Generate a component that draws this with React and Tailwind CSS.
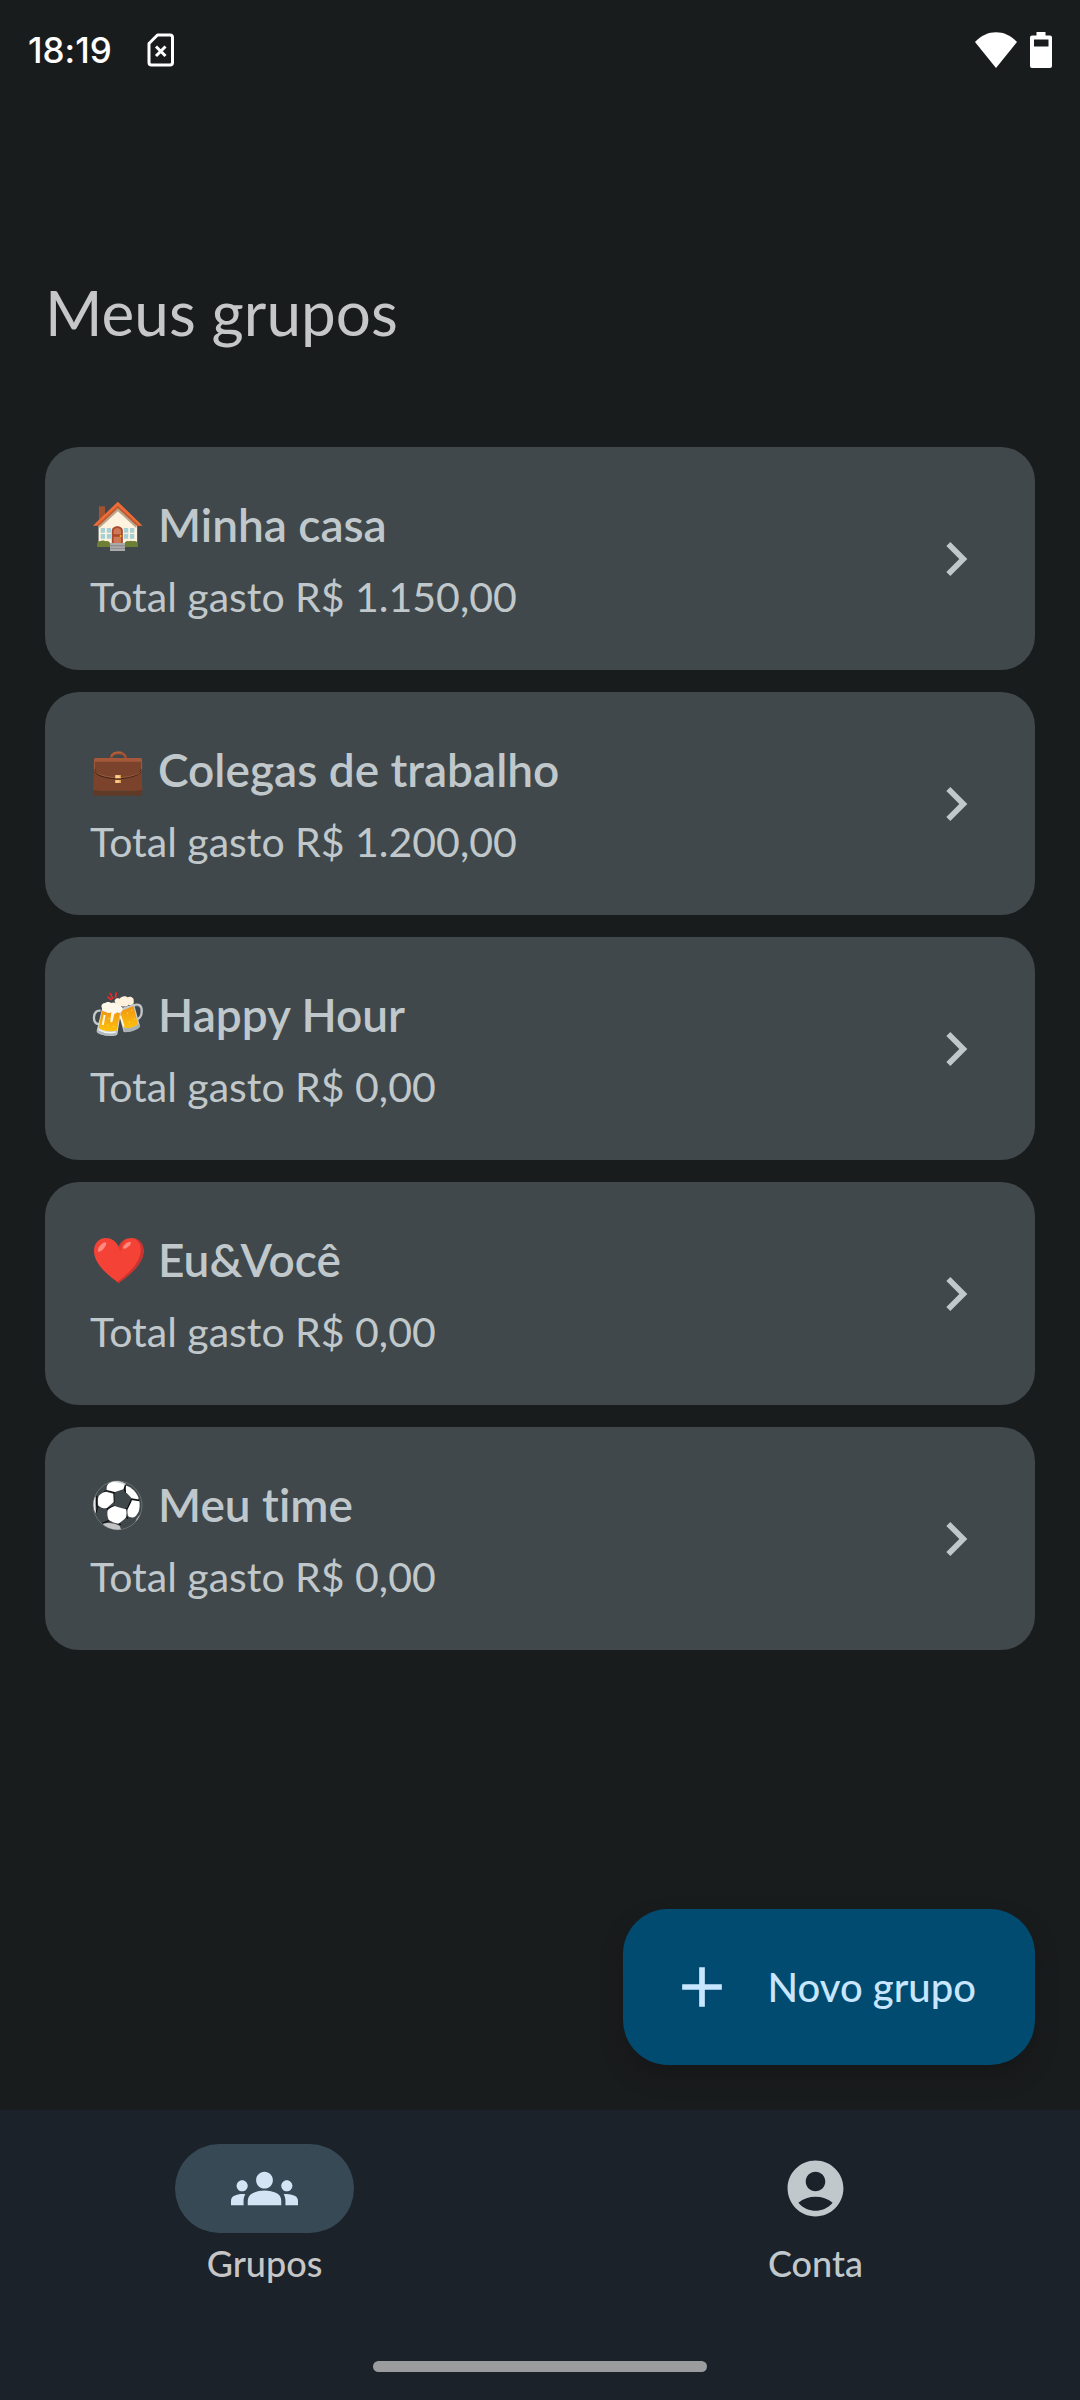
import { MdAccountCircle, MdAdd, MdChevronRight, MdGroups } from "react-icons/md";

function HouseIcon() {
  return (
    <svg viewBox="0 204 168 168" className="size-14 shrink-0" aria-hidden="true">
      <g transform="translate(-180 0) scale(1.0714 1)">
        <rect x="193" y="229" width="17" height="42" fill="#a3522f" />
        <path d="M192 286 246 233l54 53v63H192z" fill="#fff3e0" />
        <path d="M246 232 194 283v12l52-51 52 51v-12z" fill="#b8a68f" />
        <path d="M246 215 176 287h16l54-55 54 55h15z" fill="#ef6c36" />
        <path d="M246 227 186 287h7l53-52 53 52h8z" fill="#bf5a2f" />
        <g fill="#a5d0d6">
          <path d="M198 294h12v14h-12zM215 294h12v14h-12zM198 312h12v14h-12zM215 312h12v14h-12z" />
          <path d="M263 294h12v14h-12zM280 294h12v14h-12zM263 312h12v14h-12zM280 312h12v14h-12z" />
        </g>
        <path d="M229 342v-40c0-18 31-18 31 0v40z" fill="#a9482c" />
        <path d="M234 313v-9c0-13 21-13 21 0v9zM234 320h21v19h-21z" fill="#cf7856" />
        <circle cx="254" cy="318" r="3" fill="#ffb300" />
        <path d="M188 351v-9c0-7 6-10 11-9 5-3 10-1 12 1 6-3 13 0 13 7v10zM265 351v-10c0-7 7-9 12-7 4-3 8-2 11 0 6-3 14 1 14 8v9z" fill="#6d7f35" />
        <path d="M224 339h42v24h-42z" fill="#aaa" />
        <path d="M224 346h42v3h-42zM224 355h42v2h-42z" fill="#888" />
      </g>
    </svg>
  );
}

function BriefcaseIcon() {
  return (
    <svg viewBox="30 39 168 168" className="size-14 shrink-0" aria-hidden="true">
      <path d="M94 83c-1-19 43-19 43 0" fill="none" stroke="#a5532f" strokeWidth="8" />
      <path d="M94 78c3-12 20-13 30-11" fill="none" stroke="#c9744b" strokeWidth="2" />
      <path d="M43 100h141l3 83H39z" fill="#7b432c" />
      <path d="M39 180c20 5 128 5 148 0l-1 14q-1 3-4 3H44q-3 0-4-3z" fill="#5f3a26" />
      <path d="M46 84h136q4 0 4 5v27c0 10-8 15-18 19-32 12-78 12-109 0-10-4-17-10-17-19V89q0-5 4-5z" fill="#7b432c" />
      <path d="M44 118c1 12 12 18 26 22 28 8 60 7 88-1 14-4 25-11 26-22" fill="none" stroke="#3f231b" strokeWidth="4" />
      <path d="M43 95v21c0 9 7 14 17 18 31 12 76 12 107 0 10-4 18-9 18-18V95" fill="none" stroke="#b76c43" strokeWidth="2" />
      <path d="M46 84h136q4 0 4 5v6H42v-6q0-5 4-5z" fill="#a6583a" />
      <path d="M105 135h18v24h-18z" fill="#db9c5a" />
      <path d="M105 145h18v5h-18z" fill="#6d3b22" />
      <path d="M107 136h12v8h-12zM107 151h11v7h-11z" fill="#ffd18a" />
    </svg>
  );
}

function BeersIcon() {
  return (
    <svg viewBox="30 54 168 168" className="size-14 shrink-0" aria-hidden="true">
      <defs>
        <linearGradient id="beer" x1="0" y1="0" x2="0" y2="1">
          <stop offset="0" stopColor="#ef9413" />
          <stop offset="1" stopColor="#ffc20a" />
        </linearGradient>
      </defs>
      <path d="M82 80l13 10M90 69l9 18M109 67l-3 17" stroke="#ee2a2a" strokeWidth="5" fill="none" />
      <path d="M161 106c15-6 24 1 24 15 1 14-6 25-17 29" fill="none" stroke="#c2c8ca" strokeWidth="7" />
      <path d="M163 109c12-4 19 1 19 13" fill="none" stroke="#888f92" strokeWidth="2" />
      <path d="M62 122c-13-2-19 7-20 19-1 13 5 22 15 21" fill="none" stroke="#c2c8ca" strokeWidth="7" />
      <path d="M113 118l49-16 18 66c1 8-37 21-49 18z" fill="#c5cbcd" />
      <path d="M118 125l42-17 14 55c-6 9-32 15-40 11z" fill="url(#beer)" />
      <path d="M131 174c16 2 35-3 46-13l3 9c-9 12-34 18-47 15z" fill="#a9b0b3" />
      <path d="M121 137l10 32" stroke="#fff8df" strokeWidth="5" />
      <path d="M67 112l56 12-11 69c-4 9-56 5-62-10z" fill="#d7dcde" />
      <path d="M66 122l54 7-9 52c-12 6-44 3-55-7z" fill="url(#beer)" />
      <path d="M54 176c16 9 40 12 57 6l-2 12c-10 7-53 3-59-9z" fill="#b3babd" />
      <path d="M56 179c16 9 36 11 51 7" fill="none" stroke="#f3f5f5" strokeWidth="4" />
      <path d="M74 135l-6 30" stroke="#fff8df" strokeWidth="6" />
      <path d="M105 97c-4-8 5-15 14-11 4-8 18-10 24-4 8-5 20 1 18 11 3 10-8 14-15 11-7 8-18 6-22 4-6 5-17 1-19-11z" fill="#fff1dc" />
      <path d="M66 114c-5-8 2-16 10-15 3-4 13-4 17 0 7-4 17 0 18 5 10 0 20 8 16 17-3 8-13 9-16 3-1 7-7 9-8 8l-5 21c-1 6-8 5-7-1l3-25c-9 4-14 1-16-2-7 2-12-3-12-11z" fill="#fff7ea" />
      <g fill="#ffdf65">
        <circle cx="86" cy="145" r="2" />
        <circle cx="83" cy="166" r="2" />
        <circle cx="101" cy="169" r="2" />
        <circle cx="143" cy="130" r="2" />
        <circle cx="155" cy="121" r="2" />
        <circle cx="148" cy="156" r="2" />
        <circle cx="163" cy="147" r="2" />
      </g>
    </svg>
  );
}

function HeartIcon() {
  return (
    <svg viewBox="30 54 168 168" className="size-14 shrink-0" aria-hidden="true">
      <path d="M116 204C88 184 42 148 42 108c0-22 14-39 35-39 17 0 31 9 39 26 8-17 22-26 38-26 22 0 37 17 37 39 0 40-47 76-75 96z" fill="#f44336" />
      <path d="M158 69c20 1 33 17 33 39 0 40-47 76-75 96l-4-3c31-24 66-54 70-91 2-20-6-35-24-41z" fill="#c63330" />
      <path d="M116 94c4-11 12-19 23-23-7 8-14 19-16 38-5-3-7-8-7-15z" fill="#d9372f" opacity="0.7" />
      <ellipse cx="66" cy="96" rx="7" ry="18" transform="rotate(40 66 96)" fill="#ff8a80" />
      <ellipse cx="141" cy="91" rx="6" ry="14" transform="rotate(50 141 91)" fill="#ff8a80" />
    </svg>
  );
}

function BallIcon() {
  return (
    <svg viewBox="30 54 168 168" className="size-14 shrink-0" aria-hidden="true">
      <defs>
        <clipPath id="ball">
          <circle cx="113" cy="136" r="73" />
        </clipPath>
      </defs>
      <circle cx="113" cy="136" r="73" fill="#40484b" stroke="#7d8588" strokeWidth="2" />
      <g clipPath="url(#ball)">
        <path d="M80 92l25 6M133 88l3-14M138 98l-5-10M155 117l22 5M155 117l-13 30M101 99l1 29M52 108l-4 6M50 110v30M54 138l-6 20M80 146l24-8M83 150l-3-6M139 170l5 6M137 147l6-2M85 178l38 16M87 182l-20 8M80 92l-8 4" stroke="#111" strokeWidth="4" fill="none" />
        <path d="M80 90c-1-10 2-18 8-21 14-8 36-6 45 2l1 5-4 12-25 8z" fill="#fff" />
        <path d="M138 77c15 3 34 21 38 38l-2 3-19-3-17-18z" fill="#fff" />
        <path d="M56 108c8-8 14-12 22-13l22 6 1 25-20 18c-7 3-18-1-26-7-2-10-2-20 1-29z" fill="#fff" />
        <path d="M83 151c7-7 14-11 21-13 12 4 22 7 34 10 2 8 2 16 0 24-7 8-14 14-23 19-9-1-20-5-29-11-4-10-5-20-3-29z" fill="#fff" />
        <path d="M156 121l22 3c2 10 1 22-2 31-4 8-9 14-14 17-7 1-13 1-17-3-3-7-3-14-2-21 5-9 9-17 13-27z" fill="#fff" />
        <path d="M39 112l8-2c-1 18 0 35 1 50-6-5-10-20-9-48z" fill="#e4e4e4" />
        <path d="M68 192c14-5 38-4 52 7l4 14H90z" fill="#c4c4c4" />
        <path d="M166 190c0-10 6-19 17-28l3 12z" fill="#bdb9b6" />
        <path d="M85 63c16-4 38 0 54 9l-4 3c-14-8-32-11-50-8z" fill="#ccc" />
      </g>
    </svg>
  );
}

const groups = [
  { name: "Minha casa", total: "1.150,00", Icon: HouseIcon },
  { name: "Colegas de trabalho", total: "1.200,00", Icon: BriefcaseIcon },
  { name: "Happy Hour", total: "0,00", Icon: BeersIcon },
  { name: "Eu&Você", total: "0,00", Icon: HeartIcon },
  { name: "Meu time", total: "0,00", Icon: BallIcon },
];

function StatusBar() {
  return (
    <div className="flex h-[100px] items-center px-7 text-white">
      <span className="font-['Inter',sans-serif] text-[35px] leading-10 font-medium">18:19</span>
      <svg viewBox="0 0 28 34" className="ml-[35px] h-[34px] w-7" fill="none" stroke="currentColor" aria-hidden="true">
        <path d="M10.500 2H23q2.500 0 2.500 2.500v25q0 2.500-2.500 2.500H4.500Q2 32 2 29.500V10.500z" strokeWidth="3" strokeLinejoin="round" />
        <path d="M9 13.500l9.500 9.500M18.500 13.500L9 23" strokeWidth="3" />
      </svg>
      <svg viewBox="0 0 42 36" className="ml-auto h-9 w-[42px]" fill="currentColor" aria-hidden="true">
        <path d="M21 36L0 10C12-3 30-3 42 10z" />
      </svg>
      <svg viewBox="0 0 22 36" className="ml-[13px] h-9 w-[22px]" fill="currentColor" aria-hidden="true">
        <path fillRule="evenodd" d="M6.500 0h9v3.500H20q2 0 2 2V34q0 2-2 2H2q-2 0-2-2V5.500q0-2 2-2h4.500zM4 7.500v7h14.500v-7z" />
      </svg>
    </div>
  );
}

function GroupCard({ name, total, Icon }) {
  return (
    <li>
      <button type="button" className="flex w-full items-center justify-between rounded-[34px] bg-[#40484b] p-[45px] text-left text-[#c0c8cc]">
        <span className="block">
          <span className="flex h-[68px] items-center gap-3 text-[46px] leading-[66px] font-semibold">
            <Icon />
            <span className="pb-[2px]">{name}</span>
          </span>
          <span className="mt-2 block text-[41px] leading-[57px]">Total gasto R$ {total}</span>
        </span>
        <MdChevronRight className="size-[68px] shrink-0" aria-hidden="true" />
      </button>
    </li>
  );
}

export default function App() {
  return (
    <div className="flex min-h-screen flex-col bg-[#191c1d] font-['Lato',sans-serif] [font-variant-ligatures:none]">
      <StatusBar />
      <main className="flex flex-1 flex-col px-[45px] pb-[45px]">
        <h1 className="mt-[172px] text-[62px] leading-[80px] text-[#c5c7c8]">Meus grupos</h1>
        <ul className="mt-[95px] flex flex-col gap-[22px]">
          {groups.map((group) => (
            <GroupCard key={group.name} {...group} />
          ))}
        </ul>
        <button type="button" className="mt-auto flex h-[156px] items-center gap-8 self-end rounded-[45px] bg-[#004b6f] pr-[59px] pl-[45px] text-[40px] font-medium text-[#c8e6ff] shadow-[0_12px_20px_rgba(20,20,22,0.6)]">
          <MdAdd className="size-[68px]" aria-hidden="true" />
          <span>Novo grupo</span>
        </button>
      </main>
      <nav className="bg-[#1c2229] pt-[34px] pb-7">
        <div className="grid grid-cols-2 gap-[22px] text-[36px] leading-[45px] font-medium">
          <a href="#grupos" aria-current="page" className="flex flex-col items-center gap-2 text-[#c6c6c7]">
            <span className="flex h-[89px] w-[179px] items-center justify-center rounded-full bg-[#374955] text-[#d3e5f5]">
              <MdGroups className="size-[67px]" aria-hidden="true" />
            </span>
            Grupos
          </a>
          <a href="#conta" className="flex flex-col items-center gap-2 text-[#c0c8cc]">
            <span className="flex h-[89px] w-[179px] items-center justify-center">
              <MdAccountCircle className="size-[67px]" aria-hidden="true" />
            </span>
            Conta
          </a>
        </div>
        <div className="mx-auto mt-[75px] h-[11px] w-[31%] rounded-full bg-[#9a9c9e]" />
      </nav>
    </div>
  );
}
